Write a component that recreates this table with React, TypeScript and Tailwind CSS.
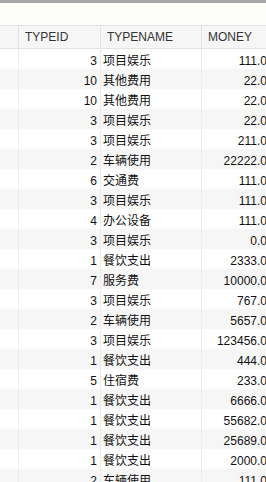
const rows: [number, string, string][] = [
  [3, '项目娱乐', '111.0'],
  [10, '其他费用', '22.0'],
  [10, '其他费用', '22.0'],
  [3, '项目娱乐', '22.0'],
  [3, '项目娱乐', '211.0'],
  [2, '车辆使用', '22222.0'],
  [6, '交通费', '111.0'],
  [3, '项目娱乐', '111.0'],
  [4, '办公设备', '111.0'],
  [3, '项目娱乐', '0.0'],
  [1, '餐饮支出', '2333.0'],
  [7, '服务费', '10000.0'],
  [3, '项目娱乐', '767.0'],
  [2, '车辆使用', '5657.0'],
  [3, '项目娱乐', '123456.0'],
  [1, '餐饮支出', '444.0'],
  [5, '住宿费', '233.0'],
  [1, '餐饮支出', '6666.0'],
  [1, '餐饮支出', '55682.0'],
  [1, '餐饮支出', '25689.0'],
  [1, '餐饮支出', '2000.0'],
  [2, '车辆使用', '111.0'],
]

const font = { fontFamily: '"Liberation Sans", "Noto Sans CJK SC", sans-serif' }

export default function App() {
  return (
    <div className="w-[266px] h-[482px] overflow-hidden bg-white text-[12px] leading-none" style={font}>
      <div className="h-[3px] bg-[#a8a8a8]" />
      <div className="h-[22px] bg-[#fdfdf9]" />

      {/* header */}
      <div className="flex w-[340px] h-[24px] border-y border-[#e3e3e3] bg-[#f6f6f6] text-[#333]">
        <div className="w-[19px] shrink-0 border-r border-[#e3e3e3]" />
        <div className="w-[82px] shrink-0 border-r border-[#e3e3e3] flex items-center pl-[6px]">TYPEID</div>
        <div className="w-[101px] shrink-0 border-r border-[#e3e3e3] flex items-center pl-[6px]">TYPENAME</div>
        <div className="w-[120px] shrink-0 flex items-center pl-[6px]">MONEY</div>
      </div>

      {/* rows */}
      {rows.map(([id, name, money], i) => (
        <div key={i} className={`flex w-[340px] h-[20px] text-[#111] ${i % 2 === 1 ? 'bg-[#f6f6f6]' : 'bg-white'}`}>
          <div className="w-[19px] shrink-0 border-r border-[#ececec]" />
          <div className="w-[82px] shrink-0 border-r border-[#ececec] flex items-center justify-end pr-[3px] pt-[3px]">{id}</div>
          <div className="w-[101px] shrink-0 border-r border-[#ececec] flex items-center pl-[2px] pt-[3px]">{name}</div>
          <div className="w-[68px] shrink-0 flex items-center justify-end pr-[3px] pt-[3px]">{money}</div>
        </div>
      ))}
    </div>
  )
}
